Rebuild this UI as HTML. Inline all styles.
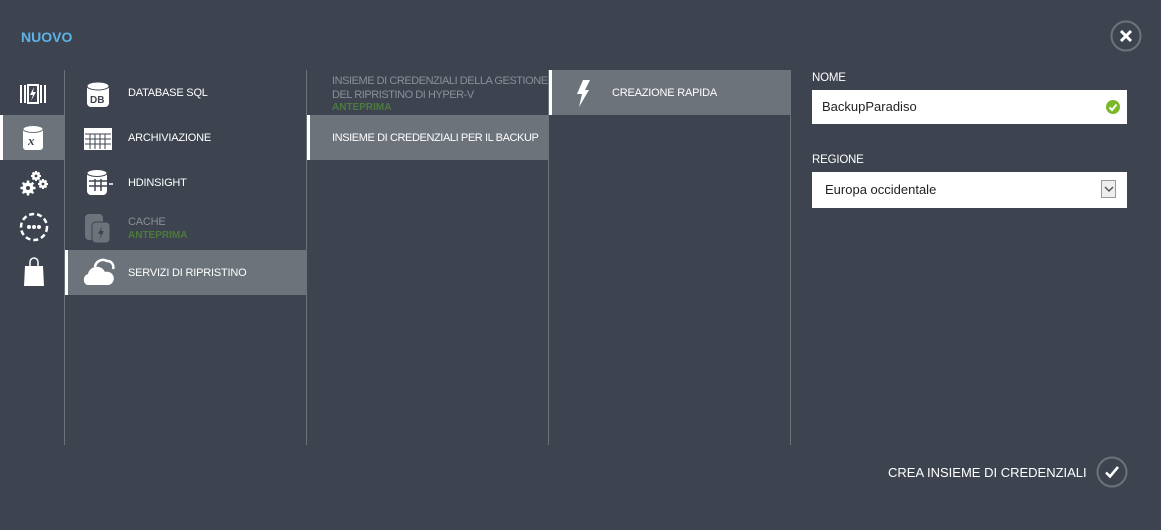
<!DOCTYPE html><html><head><style>
body{margin:0;width:1161px;height:530px;background:#3d4450;font-family:"Liberation Sans",sans-serif;color:#fff;position:relative;overflow:hidden}
.a{position:absolute}
.t{font-size:11px;letter-spacing:-0.2px}
.vl{position:absolute;top:70px;height:375px;width:1px;background:#6d737b}
.sel{position:absolute;background:#6d737b}
.bar{position:absolute;background:#fff;width:3px}
.g{color:#4d7a3d;font-weight:bold;font-size:10px}
.d{color:#8a9099}
</style></head><body>
<div class="a" style="left:21px;top:29px;font-size:14px;font-weight:bold;color:#5db2e8">NUOVO</div>
<svg class="a" style="left:1110px;top:20px" width="32" height="32"><circle cx="16" cy="16" r="14.5" fill="none" stroke="#6d737b" stroke-width="2"/><path d="M11 11L21 21M21 11L11 21" stroke="#fff" stroke-width="3"/></svg>

<div class="sel" style="left:0;top:115px;width:64px;height:45px"></div><div class="bar" style="left:0;top:115px;height:45px"></div>
<div class="vl" style="left:64px"></div><div class="vl" style="left:306px"></div><div class="vl" style="left:548px"></div><div class="vl" style="left:790px"></div>

<svg class="a" style="left:20px;top:84px" width="26" height="20"><rect x="0" y="1" width="2" height="18" fill="#fff"/><rect x="4" y="1" width="2" height="18" fill="#fff"/><rect x="8" y="1" width="10" height="18" fill="none" stroke="#fff" stroke-width="2"/><path d="M14 3L10 11H13L11 17L16 8H13Z" fill="#fff"/><rect x="20" y="1" width="2" height="18" fill="#fff"/><rect x="24" y="1" width="2" height="18" fill="#fff"/></svg>
<svg class="a" style="left:22px;top:125px" width="22" height="26"><rect x="1" y="3" width="20" height="22" rx="3" fill="#fff"/><ellipse cx="11" cy="4" rx="10" ry="3.5" fill="#fff" stroke="#6d737b"/><text x="6" y="20" font-size="13" font-style="italic" font-weight="bold" fill="#3d4450" font-family="Liberation Serif">x</text></svg>
<svg class="a" style="left:20px;top:170px" width="30" height="26"><g fill="#fff"><circle cx="8" cy="18" r="5.5"/><circle cx="16" cy="6" r="4"/><circle cx="23" cy="14" r="4"/></g><g stroke="#fff" stroke-width="2.5"><path d="M8 10.5V25.5M0.5 18H15.5M2.7 12.7L13.3 23.3M13.3 12.7L2.7 23.3"/><path d="M16 1V11M11 6H21M12.5 2.5L19.5 9.5M19.5 2.5L12.5 9.5" stroke-width="2"/><path d="M23 9V19M18 14H28M19.5 10.5L26.5 17.5M26.5 10.5L19.5 17.5" stroke-width="2"/></g><g fill="#3d4450"><circle cx="8" cy="18" r="2"/><circle cx="16" cy="6" r="1.4"/><circle cx="23" cy="14" r="1.4"/></g></svg>
<svg class="a" style="left:19px;top:212px" width="30" height="30"><circle cx="15" cy="15" r="13" fill="none" stroke="#fff" stroke-width="2.5" stroke-dasharray="5 3"/><circle cx="10" cy="15" r="2" fill="#fff"/><circle cx="15" cy="15" r="2" fill="#fff"/><circle cx="20" cy="15" r="2" fill="#fff"/></svg>
<svg class="a" style="left:23px;top:257px" width="22" height="30"><path d="M7 9V5a4 4 0 0 1 8 0v4" fill="none" stroke="#fff" stroke-width="1.5"/><path d="M2 9H20L21 29H1Z" fill="#fff"/></svg>

<div class="sel" style="left:65px;top:250px;width:241px;height:45px"></div><div class="bar" style="left:65px;top:250px;height:45px"></div>
<svg class="a" style="left:86px;top:81px" width="24" height="28"><rect x="1" y="4" width="22" height="22" rx="4" fill="#fff"/><ellipse cx="12" cy="5" rx="11" ry="4" fill="#fff" stroke="#3d4450"/><text x="4" y="22" font-size="10" font-weight="bold" fill="#3d4450">DB</text></svg>
<div class="a t" style="left:128px;top:87px">DATABASE SQL</div>
<svg class="a" style="left:84px;top:128px" width="28" height="22"><rect x="0" y="0" width="28" height="22" fill="#fff"/><path d="M1 6H27M1 11H27M1 16H27M6 6V21M11 6V21M16 6V21M21 6V21" stroke="#3d4450" stroke-width="1"/></svg>
<div class="a t" style="left:128px;top:132px">ARCHIVIAZIONE</div>
<svg class="a" style="left:85px;top:169px" width="30" height="28"><rect x="2" y="3" width="20" height="23" rx="4" fill="#fff"/><ellipse cx="12" cy="4" rx="10" ry="3.5" fill="#fff" stroke="#3d4450"/><path d="M4 12H24M4 17H24M10 10V22M16 10V22" stroke="#3d4450" stroke-width="1.5"/><path d="M24 15H28" stroke="#fff" stroke-width="1.5"/></svg>
<div class="a t" style="left:128px;top:177px">HDINSIGHT</div>
<svg class="a" style="left:84px;top:212px" width="28" height="32"><rect x="1" y="2" width="18" height="26" rx="4" fill="#6d737b"/><rect x="8" y="10" width="18" height="21" rx="4" fill="#6d737b" stroke="#3d4450"/><path d="M18 14L14 22H17L15 28L20 19H17Z" fill="#3d4450"/></svg>
<div class="a t d" style="left:128px;top:216px">CACHE</div>
<div class="a g" style="left:128px;top:230px">ANTEPRIMA</div>
<svg class="a" style="left:83px;top:257px" width="32" height="30"><path d="M4 28a6 6 0 0 1 1-11a9 9 0 0 1 17-2a6 6 0 0 1 4 13Z" fill="#fff"/><path d="M12 10a8 8 0 0 1 12-6a6 6 0 0 1 6 8" fill="none" stroke="#fff" stroke-width="2.5"/></svg>
<div class="a t" style="left:128px;top:267px">SERVIZI DI RIPRISTINO</div>

<div class="a t d" style="left:332px;top:74px;line-height:14px;letter-spacing:-0.45px">INSIEME DI CREDENZIALI DELLA GESTIONE<br>DEL RIPRISTINO DI HYPER-V</div>
<div class="a g" style="left:332px;top:102px">ANTEPRIMA</div>
<div class="sel" style="left:307px;top:115px;width:241px;height:45px"></div><div class="bar" style="left:307px;top:115px;height:45px"></div>
<div class="a t" style="left:332px;top:132px;letter-spacing:-0.4px">INSIEME DI CREDENZIALI PER IL BACKUP</div>

<div class="sel" style="left:549px;top:70px;width:241px;height:45px"></div><div class="bar" style="left:549px;top:70px;height:45px"></div>
<svg class="a" style="left:575px;top:80px" width="16" height="28"><path d="M8 0H15L10 10H14L4 27L7 14H2Z" fill="#fff"/></svg>
<div class="a t" style="left:612px;top:87px">CREAZIONE RAPIDA</div>

<div class="a t" style="left:812px;top:72px;font-size:11.5px">NOME</div>
<div class="a" style="left:812px;top:90px;width:315px;height:34px;background:#fff"></div>
<div class="a" style="left:822px;top:99px;font-size:13px;color:#222">BackupParadiso</div>
<svg class="a" style="left:1105px;top:99px" width="16" height="16"><circle cx="8" cy="8" r="7" fill="#7ab829"/><path d="M4.5 8.5L7 11L11.5 5.5" stroke="#fff" stroke-width="2" fill="none"/></svg>
<div class="a t" style="left:812px;top:154px;font-size:11.5px">REGIONE</div>
<div class="a" style="left:812px;top:172px;width:315px;height:36px;background:#fff"></div>
<div class="a" style="left:825px;top:182px;font-size:13px;color:#222">Europa occidentale</div>
<div class="a" style="left:1101px;top:180px;width:15px;height:18px;border:1px solid #999;background:#eee;box-sizing:border-box"></div>
<svg class="a" style="left:1104px;top:185px" width="10" height="8"><path d="M1 2L5 6L9 2" stroke="#555" stroke-width="1.5" fill="none"/></svg>

<div class="a" style="left:888px;top:465px;font-size:13px">CREA INSIEME DI CREDENZIALI</div>
<svg class="a" style="left:1096px;top:456px" width="32" height="32"><circle cx="16" cy="16" r="14.5" fill="none" stroke="#6d737b" stroke-width="2"/><path d="M10 16.5L14 20.5L22 11" stroke="#fff" stroke-width="2.6" fill="none"/></svg>
</body></html>
